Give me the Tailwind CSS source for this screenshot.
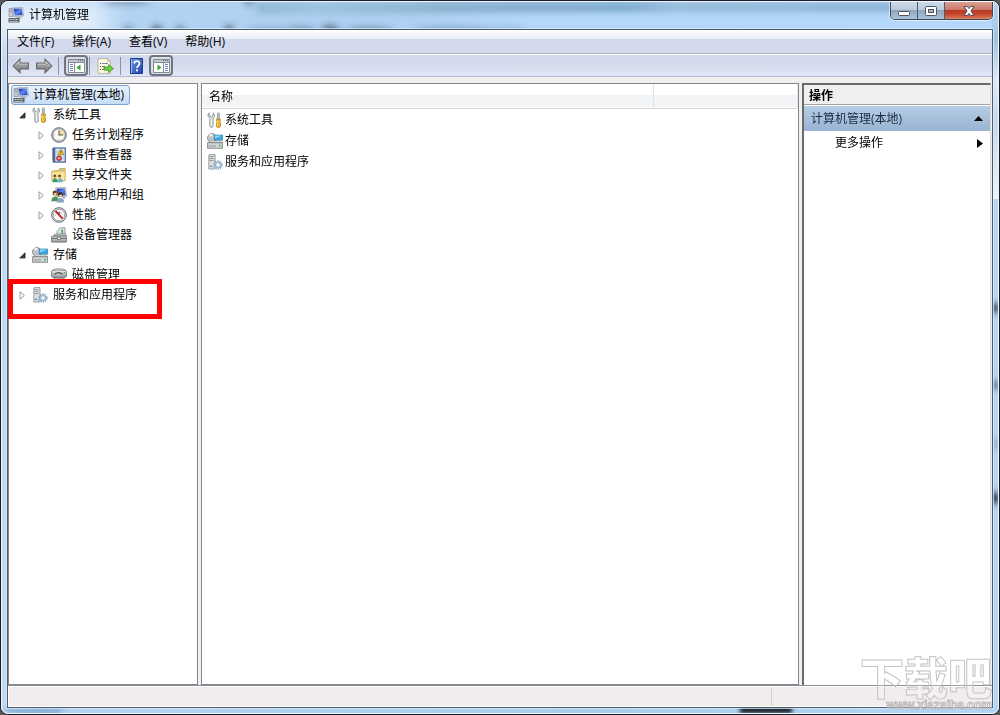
<!DOCTYPE html>
<html lang="zh-CN">
<head>
<meta charset="utf-8">
<title>计算机管理</title>
<script src="https://cdn.jsdelivr.net/npm/@tailwindcss/browser@4"></script>
</head>
<body class="relative flex h-screen overflow-hidden bg-[#5b5955] font-['Open_Sans','Noto_Sans_CJK_SC',sans-serif] text-xs text-black">

<svg width="0" height="0" class="absolute" aria-hidden="true">
  <defs>
    <linearGradient id="g-arrow" x1="0" y1="0" x2="0" y2="1"><stop offset="0" stop-color="#b5b5b5"/><stop offset="1" stop-color="#7d7d7d"/></linearGradient>
    <linearGradient id="g-screen" x1="0" y1="0" x2="1" y2="1"><stop offset="0" stop-color="#0d1fa8"/><stop offset=".5" stop-color="#5e86f0"/><stop offset="1" stop-color="#1230c0"/></linearGradient>
    <linearGradient id="g-metal" x1="0" y1="0" x2="0" y2="1"><stop offset="0" stop-color="#f4f4f4"/><stop offset="1" stop-color="#8e9296"/></linearGradient>
    <linearGradient id="g-help" x1="0" y1="0" x2="1" y2="1"><stop offset="0" stop-color="#6f9be8"/><stop offset="1" stop-color="#1b3fae"/></linearGradient>
    <filter id="f-blur" x="-50%" y="-100%" width="200%" height="300%"><feGaussianBlur stdDeviation="3"/></filter>

    <symbol id="i-computer" viewBox="0 0 16 16">
      <path d="M1 1.5h4v8H1z" fill="#c9cdd2" stroke="#7c828a" stroke-width=".6"/>
      <path d="M1.8 3h2M1.8 4.5h2" stroke="#6d7278" stroke-width=".6"/>
      <path d="M4.5.8 14.6.5 15.6 9 6 9.6z" fill="#d7dbe0" stroke="#8d949c" stroke-width=".6"/>
      <path d="M5.6 1.8 13.7 1.5 14.5 8 6.8 8.5z" fill="url(#g-screen)"/>
      <path d="M8.8 9.5h3.6l1.2 2H8z" fill="#aeb3b8"/>
      <path d="M.5 11h11v4.5H.5z" fill="#5d6266"/>
      <path d="M1.5 12h2v1h-2zM4.5 12h2v1h-2zM7.5 12h2v1h-2zM1.5 14h8.5v.7H1.5z" fill="#d5d8da"/>
    </symbol>
    <symbol id="i-tools" viewBox="0 0 16 16">
      <path d="M2.2.8 2.4 3.7 4.3 4.6 6 3.6 6.1.9C7.6 1.8 8 4 7 5.3L6.1 6.4v7.7c0 1.8-3.3 1.8-3.3 0V6.4L1.5 5.2C.6 3.8.8 1.7 2.2.8z" fill="#d9dcde" stroke="#777b7f" stroke-width=".7"/>
      <path d="M4.5 7v7" stroke="#fff" stroke-width=".8"/>
      <path d="M10.4 1.5 11.3.5l1 1v5.7h-1.9z" fill="#c3c6c9" stroke="#74787c" stroke-width=".6"/>
      <path d="M9.4 7.2h4v1.9l-.8.8.9 1v3.2c0 1.9-4.2 1.9-4.2 0v-3.2l.9-1-.8-.8z" fill="#eeb220" stroke="#a96f06" stroke-width=".6"/>
      <path d="M10.7 8v6" stroke="#ffe48a" stroke-width=".8"/>
    </symbol>
    <symbol id="i-clock" viewBox="0 0 16 16">
      <circle cx="8" cy="8" r="7.3" fill="#b4bbc4" stroke="#62666c" stroke-width=".9"/>
      <circle cx="8" cy="8" r="5.9" fill="#fdf9ec" stroke="#8c9198" stroke-width=".5"/>
      <path d="M8 8V2.4A5.6 5.6 0 0 1 13.6 8z" fill="#f3dfa5"/>
      <path d="M8 3.5V8h3.8" fill="none" stroke="#50545b" stroke-width="1.1"/>
      <path d="M8 12.4v1M2.7 8h1M12.4 8h1" stroke="#8a8e94" stroke-width=".7"/>
    </symbol>
    <symbol id="i-event" viewBox="0 0 16 16">
      <path d="M2 .8h12.500v14.500H2z" fill="#4a6fae" stroke="#2c4a85" stroke-width=".6"/>
      <path d="M4.300 1.600h9.400v12.800H4.300z" fill="#dfe8f5"/>
      <path d="M5 4h8M5 6h8M5 8h8M5 10h8M5 12h8" stroke="#93abd3" stroke-width=".6"/>
      <path d="M.9 2.600h2.600M.9 5h2.600M.9 7.400h2.600M.9 9.800h2.600M.9 12.200h2.600" stroke="#555f70" stroke-width=".9"/>
      <path d="M9.900 2 13 7.500H6.900z" fill="#ffd320" stroke="#a77e00" stroke-width=".6"/>
      <path d="M9.900 3.800v2M9.900 6.300v.7" stroke="#222" stroke-width=".8"/>
      <circle cx="8" cy="11.300" r="2.500" fill="#d8303c" stroke="#93141d" stroke-width=".5"/>
      <path d="M7 10.300l2 2M9 10.300l-2 2" stroke="#fff" stroke-width=".9"/>
    </symbol>
    <symbol id="i-share" viewBox="0 0 16 16">
      <path d="M.8 4.200 7.500 3.400 8.600 1.500h5.600v12.200H.8z" fill="#efcb62" stroke="#b18c2a" stroke-width=".6"/>
      <path d="M9 2.400h4.400v1.200H9z" fill="#8fc7e8"/>
      <path d="M1.400 5.200h12.200v8H1.400z" fill="#fae6a0"/>
      <circle cx="3.900" cy="9" r="1.500" fill="#6a4a22"/><circle cx="8.500" cy="9" r="1.500" fill="#6a4a22"/>
      <path d="M4.200 9.200 5 11H3zM8.800 9.200l.8 1.800h-2z" fill="#e5b78c"/>
      <path d="M1.400 15.300c0-5.500 5.400-5.500 5.400 0z" fill="#3d9a68"/><path d="M6.400 15.300c0-5.500 5.400-5.500 5.400 0z" fill="#6db2c4"/>
    </symbol>
    <symbol id="i-users" viewBox="0 0 16 16">
      <path d="M4.600.8 14.600.5 15.600 9.200 6 9.800z" fill="#d7dbe0" stroke="#8d949c" stroke-width=".6"/>
      <path d="M5.800 1.800 13.700 1.500 14.500 8.200 6.800 8.600z" fill="url(#g-screen)"/>
      <path d="M11.600 9.500h2.600v2.200h-2.600z" fill="#aeb3b8"/>
      <circle cx="4.200" cy="6" r="2.600" fill="#5c3d1f"/><path d="M2.700 6.200c1 .1 2-.4 2.700-1 .8 1.500.2 3.600-1.200 3.600S2.600 7.400 2.700 6.200z" fill="#efc59d"/>
      <path d="M.3 14.200c0-6.200 7.800-6.200 7.800 0z" fill="#4b9855"/>
      <circle cx="9.400" cy="7.600" r="2.500" fill="#4a3020"/><path d="M8 7.900c1 .1 2-.4 2.600-1 .8 1.500.2 3.300-1.100 3.300S8 9 8 7.900z" fill="#efc59d"/>
      <path d="M5.600 15.500c0-6 7.700-6 7.700 0z" fill="#8aa3be"/>
    </symbol>
    <symbol id="i-perf" viewBox="0 0 16 16">
      <circle cx="8" cy="8" r="7.300" fill="#dfe1e3" stroke="#55585c" stroke-width=".9"/>
      <circle cx="8" cy="8" r="5.700" fill="#fff" stroke="#777" stroke-width=".6"/>
      <path d="M4.200 8.500a3.900 3.900 0 0 1 7.600 0" fill="none" stroke="#6b6f73" stroke-width=".9" stroke-dasharray="1 1"/>
      <path d="M4.400 3.900 11.600 11.600" stroke="#d01c26" stroke-width="2"/>
      <path d="M8.400 4.600v4" stroke="#555" stroke-width=".8"/>
    </symbol>
    <symbol id="i-device" viewBox="0 0 16 16">
      <path d="M6 4.500 9 .8h5v7.400H6z" fill="#dfe3e4" stroke="#767c80" stroke-width=".7"/>
      <path d="M10.300 2.600h1.800v4h-1.800z" fill="#4fa953"/>
      <path d="M2.200 9 4 7h10.500l1 2z" fill="#c2c7cb" stroke="#6d7378" stroke-width=".6"/>
      <path d="M.6 9.300h14.800v5.800H.6z" fill="url(#g-metal)" stroke="#5b6065" stroke-width=".7"/>
      <path d="M.8 11.300h14.400" stroke="#53585d" stroke-width="1"/>
      <path d="M6.500 10.300h3v2.200h-3z" fill="#f6f6f6" stroke="#53585d" stroke-width=".6"/>
    </symbol>
    <symbol id="i-storage" viewBox="0 0 16 16">
      <circle cx="4.900" cy="5" r="4.400" fill="#c4c9cc" stroke="#676c70" stroke-width=".7"/>
      <path d="M4.900 5 1.800 2A4.200 4.200 0 0 1 5.400.9z" fill="#f3f5f6"/>
      <circle cx="4.900" cy="5" r="1.200" fill="#fff" stroke="#7a7f83" stroke-width=".6"/>
      <path d="M7.400 2h8.200v5.200H7.400z" fill="#3faae0" stroke="#1f6e9e" stroke-width=".6"/>
      <path d="M8 2.600h7L8 5.300z" fill="#93dafa"/>
      <path d="M1.500 9.700 3 8h11l1.500 1.700z" fill="#eef0f1" stroke="#7d8286" stroke-width=".5"/>
      <path d="M.6 9.700h15v5.600H.6z" fill="#d2d5d8" stroke="#5e6367" stroke-width=".7"/>
      <path d="M2 13h7" stroke="#8a8f93" stroke-width=".9"/><path d="M12 11.700h1.800v1.800H12z" fill="#3fc043"/>
    </symbol>
    <symbol id="i-disk" viewBox="0 0 16 16">
      <path d="M1 3.500C2.500 1 13.500 1 15 3.500z" fill="#f0f1f2" stroke="#83888c" stroke-width=".6"/>
      <path d="M.6 4.200c0-1.600 14.800-1.600 14.800 0v5.300c0 1.500-14.800 1.500-14.800 0z" fill="url(#g-metal)" stroke="#5b6064" stroke-width=".7"/>
      <path d="M3.500 7.200Q8 4.200 11.500 7.200" fill="none" stroke="#44484c" stroke-width="1.300"/>
      <path d="M12.700 5h1.500v1.500h-1.500z" fill="#3fc043"/>
      <path d="M2.500 10.500h11l-1.500 3.500H4z" fill="#a9aeb2" stroke="#666b6f" stroke-width=".6"/>
    </symbol>
    <symbol id="i-service" viewBox="0 0 16 16">
      <path d="M1.800 1.200 3 .4h5v13.800l-1 .8H1.800z" fill="#dbe0e4" stroke="#737a80" stroke-width=".7"/>
      <path d="M2.600 2.600h4M2.600 4.600h4M2.600 6.600h4" stroke="#7d858c" stroke-width=".8"/>
      <path d="M3.200 12.200h1.600" stroke="#3d444a" stroke-width="1"/>
      <circle cx="11" cy="11" r="3.900" fill="none" stroke="#7f9fbc" stroke-width="1.600" stroke-dasharray="1.400 1.050"/>
      <circle cx="11" cy="11" r="2.500" fill="#fff" stroke="#9dbad4" stroke-width="1.600"/>
      <circle cx="6.900" cy="14" r="1.200" fill="#dce9f3" stroke="#8aa7c0" stroke-width=".8"/>
    </symbol>
    <symbol id="i-arrow" viewBox="0 0 18 16">
      <path d="M1.200 8 8 1.200v3.900h8.400v5.800H8v3.900z" fill="url(#g-arrow)" stroke="#686868" stroke-width="1.100"/>
      <path d="M2.800 8 7 3.700V6.100h8.300" fill="none" stroke="#d5d5d5" stroke-width=".8"/>
    </symbol>
    <symbol id="i-pane" viewBox="0 0 17 15">
      <path d="M.5 1.500h16v13H.5z" fill="#fff" stroke="#858b96"/>
      <path d="M1 2h15v2H1z" fill="#c2c8d3"/>
      <path d="M10 2.500h1M12 2.500h1M14 2.500h1" stroke="#5d6470"/>
      <path d="M1 4.500h15M6.500 5v9" stroke="#858b96"/>
      <path d="M2 6.500h3M2 8.500h3M2 10.500h3M2 12.500h3" stroke="#6f88b8"/>
      <path d="M12.500 6.500v6L8.500 9.500z" fill="#37a62c"/>
    </symbol>
    <symbol id="i-pane2" viewBox="0 0 17 15">
      <path d="M.5 1.500h16v13H.5z" fill="#fff" stroke="#858b96"/>
      <path d="M1 2h15v2H1z" fill="#c2c8d3"/>
      <path d="M10 2.500h1M12 2.500h1M14 2.500h1" stroke="#5d6470"/>
      <path d="M1 4.500h15M10.500 5v9" stroke="#858b96"/>
      <path d="M12 6.500h3M12 8.500h3M12 10.500h3M12 12.500h3" stroke="#6f88b8"/>
      <path d="M4.500 6.500v6l4-3z" fill="#37a62c"/>
    </symbol>
    <symbol id="i-export" viewBox="0 0 17 16">
      <path d="M1 .6h9.500L13.400 3.500v11.900H1z" fill="#fffbe3" stroke="#a8a38a" stroke-width=".8"/>
      <path d="M10.500.6v2.900h2.900z" fill="#e3dcb4" stroke="#a8a38a" stroke-width=".5"/>
      <path d="M3 5.500h1M3 8.500h1M3 11.500h1" stroke="#444"/><path d="M5 5.500h6M5 8.500h3M5 11.500h5" stroke="#6f83ae"/>
      <path d="M7 9h4.500V6.500L16.400 10.600 11.500 14.600V12.200H7z" fill="#66d13a" stroke="#2e8b1b" stroke-width=".7"/>
    </symbol>
    <symbol id="i-help" viewBox="0 0 13 16">
      <path d="M.5.5h12v15H.5z" fill="url(#g-help)" stroke="#1f3b8f"/>
      <path d="M1.500 1v14" stroke="#9dbdf3"/>
      <path d="M4.300 5.500C4.300 2.300 9.500 2.300 9.500 5.400 9.500 7.600 7 7.600 7 10" fill="none" stroke="#fff" stroke-width="1.700"/>
      <path d="M6 11.500h2v1.800H6z" fill="#fff"/>
    </symbol>
    <symbol id="i-closed" viewBox="0 0 7 9"><path d="M1 .8v7.400L5.300 4.500z" fill="#fff" stroke="#9a9a9a"/></symbol>
    <symbol id="i-open" viewBox="0 0 7 7"><path d="M6 .8V6H.8z" fill="#404040" stroke="#1c1c1c" stroke-width=".8"/></symbol>
  </defs>
</svg>

<div class="flex min-w-0 flex-1 flex-col rounded-lg border border-[#1b1c28] bg-[#b3d5f7]">
 <div class="relative flex min-h-0 flex-1 flex-col rounded-[7px] border border-[#eef6fd] bg-[linear-gradient(90deg,#c3dbf1,#b4d4f4_30px,#a9cdef_60%,#b3d5f7)] px-[5px] pb-[5px]">

  <!-- glass reflections along the frame -->
  <div class="pointer-events-none absolute inset-0 overflow-hidden rounded-md" aria-hidden="true">
    <div class="absolute top-0 right-0 left-[255px] h-3 bg-[linear-gradient(90deg,#92b8d3,#9cc3e2_8%,#8cb2d0_25%,#82add0_50%,#9abddc_56%,#8ab3d5)] blur-[3px]"></div>
    <div class="absolute top-3 right-0 left-[35%] h-4 bg-[linear-gradient(90deg,#b4d7fa00,#b4d7fa_30%)] blur-[3px]"></div>
    <div class="absolute top-0 -left-3 h-9 w-30 rounded-full bg-white/70 blur-md"></div>
    <div class="absolute top-0 right-0 h-[197px] w-[6px] bg-[linear-gradient(#b7d3ee,#9fc4e6_20%,#dfecf8_40%,#c5d9ea_60%,#eef4fa)]"></div>
    <svg class="absolute inset-0 h-full w-full">
      <g filter="url(#f-blur)" fill="#24364a">
        <ellipse cx="126" cy="28" rx="6" ry="4" opacity=".4"/><ellipse cx="155" cy="28" rx="6" ry="5" opacity=".6"/>
        <ellipse cx="178" cy="28" rx="5" ry="4" opacity=".5"/><ellipse cx="227" cy="28" rx="5" ry="5" opacity=".6"/>
        <ellipse cx="268" cy="29" rx="24" ry="3" opacity=".35"/><ellipse cx="300" cy="28" rx="14" ry="4" opacity=".35"/>
        <ellipse cx="328" cy="28" rx="9" ry="5" opacity=".6"/><ellipse cx="368" cy="29" rx="24" ry="4" opacity=".4"/>
        <ellipse cx="450" cy="29" rx="40" ry="4" opacity=".3"/><ellipse cx="504" cy="29" rx="20" ry="3" opacity=".25"/>
        <ellipse cx="125" cy="0" rx="24" ry="2" opacity=".5"/><ellipse cx="247" cy="0" rx="5" ry="3" opacity=".5"/>
      </g>
    </svg>
    <svg class="absolute top-0 right-0 h-full w-[6px]">
      <g filter="url(#f-blur)" fill="#142434"><ellipse cx="3" cy="306" rx="5" ry="5" opacity=".8"/><ellipse cx="3" cy="383" rx="5" ry="4" opacity=".6"/><ellipse cx="3" cy="496" rx="5" ry="6" opacity=".9"/><ellipse cx="3" cy="442" rx="4" ry="4" opacity=".3"/></g>
    </svg>
    <div class="absolute bottom-0 left-[738px] h-[6px] w-13 bg-[#080c12] blur-[2px]"></div>
    <div class="absolute bottom-0 left-1 h-[5px] w-14 bg-[#6f9cc8] blur-[3px]"></div>
  </div>

  <header class="relative flex h-[27px] items-start justify-between">
    <div class="flex h-[25px] items-center gap-[5px] pl-px">
      <svg class="size-4"><use href="#i-computer"/></svg>
      <h1>计算机管理</h1>
    </div>
    <div class="flex h-[18px] overflow-hidden rounded-b-[5px] border border-t-0 border-[#3f4a58] shadow-[0_0_0_1px_rgba(255,255,255,.55)]">
      <button aria-label="最小化" class="flex w-[27px] items-center justify-center border-r border-[#4d5a6a] bg-[linear-gradient(#cddbe8,#b8cadc_48%,#8fa6be_50%,#aac3dc)]">
        <svg class="h-3 w-4" viewBox="0 0 16 12"><rect x="2.500" y="6.500" width="11" height="4" rx="1" fill="#fff" stroke="#50545f"/></svg>
      </button>
      <button aria-label="最大化" class="flex w-[27px] items-center justify-center border-r border-[#4d5a6a] bg-[linear-gradient(#cddbe8,#b8cadc_48%,#8fa6be_50%,#aac3dc)]">
        <svg class="h-3 w-4" viewBox="0 0 16 12"><rect x="2.500" y="1.500" width="11" height="9" rx="1" fill="#fff" stroke="#50545f"/><rect x="5.500" y="4.500" width="5" height="3" fill="#9fb4ca" stroke="#50545f"/></svg>
      </button>
      <button aria-label="关闭" class="flex w-[47px] items-center justify-center bg-[linear-gradient(#dba294,#cb7466_48%,#b33a25_50%,#c9492e_75%,#d98467)]">
        <svg class="h-3 w-4" viewBox="0 0 16 12"><path d="M3 1.500h3.200L8 3.600 9.800 1.500H13L9.900 6l3.100 4.500H9.800L8 8.400l-1.800 2.100H3L6.100 6z" fill="#fff" stroke="#4f5160"/></svg>
      </button>
    </div>
  </header>

  <div class="relative flex min-h-0 flex-1 flex-col border border-[#4c5b6c] bg-[#f0f0f0] shadow-[0_0_0_1px_rgba(225,240,253,.7)]">
    <nav aria-label="菜单" class="flex h-6 items-center gap-[18px] border-b border-[#b2b5bd] bg-[linear-gradient(#fff,#e7edf6_9px,#d3d9ec_9px)] pl-[9px]">
      <button>文件(F)</button><button>操作(A)</button><button>查看(V)</button><button>帮助(H)</button>
    </nav>
    <div role="toolbar" aria-label="工具栏" class="flex h-[23px] items-center border-t border-b border-t-white border-b-[#aebbd5] bg-[linear-gradient(#d3d9ec_30%,#e0e6f4)] pl-1">
      <button aria-label="后退"><svg class="h-4 w-[18px]"><use href="#i-arrow"/></svg></button>
      <button aria-label="前进" class="ml-[5px]"><svg class="h-4 w-[18px] -scale-x-100"><use href="#i-arrow"/></svg></button>
      <span class="ml-[5px] h-[18px] w-px bg-[#8d929e]"></span>
      <button aria-label="显示/隐藏控制台树" class="ml-[5px] flex h-[21px] w-6 items-center justify-center rounded-[4px] border-2 border-[#71757f] bg-[#dadde6]"><svg class="h-[15px] w-[17px] shrink-0"><use href="#i-pane"/></svg></button>
      <span class="ml-px h-[18px] w-px bg-[#8d929e]"></span>
      <button aria-label="导出列表" class="ml-[7px]"><svg class="h-4 w-[17px]"><use href="#i-export"/></svg></button>
      <span class="ml-[6px] h-[18px] w-px bg-[#8d929e]"></span>
      <button aria-label="帮助" class="ml-[9px]"><svg class="h-4 w-[13px]"><use href="#i-help"/></svg></button>
      <button aria-label="显示/隐藏操作窗格" class="ml-[6px] flex h-[21px] w-6 items-center justify-center rounded-[4px] border-2 border-[#71757f] bg-[#dadde6]"><svg class="h-[15px] w-[17px] shrink-0"><use href="#i-pane2"/></svg></button>
    </div>

    <main class="flex min-h-0 flex-1 gap-[3px] pt-[6px] pr-px">
      <section aria-label="控制台树" class="w-[190px] border border-[#828790] bg-white pt-px leading-5">
        <ul>
          <li><a href="#root" class="ml-[2px] flex h-5 w-[119px] items-center gap-1 rounded-[3px] border border-[#7da2ce] bg-[linear-gradient(#e9f2fd,#c6dcf8)] pl-px whitespace-nowrap"><svg class="size-4 shrink-0"><use href="#i-computer"/></svg>计算机管理(本地)</a></li>
          <li class="flex h-5 items-center pl-[10px]"><button aria-label="折叠"><svg class="h-[7px] w-[7px]"><use href="#i-open"/></svg></button><svg class="mr-[5px] ml-[6px] size-4"><use href="#i-tools"/></svg>系统工具</li>
          <li>
            <ul>
              <li class="flex h-5 items-center pl-[29px]"><button aria-label="展开"><svg class="h-[9px] w-[7px]"><use href="#i-closed"/></svg></button><svg class="mr-[5px] ml-[6px] size-4"><use href="#i-clock"/></svg>任务计划程序</li>
              <li class="flex h-5 items-center pl-[29px]"><button aria-label="展开"><svg class="h-[9px] w-[7px]"><use href="#i-closed"/></svg></button><svg class="mr-[5px] ml-[6px] size-4"><use href="#i-event"/></svg>事件查看器</li>
              <li class="flex h-5 items-center pl-[29px]"><button aria-label="展开"><svg class="h-[9px] w-[7px]"><use href="#i-closed"/></svg></button><svg class="mr-[5px] ml-[6px] size-4"><use href="#i-share"/></svg>共享文件夹</li>
              <li class="flex h-5 items-center pl-[29px]"><button aria-label="展开"><svg class="h-[9px] w-[7px]"><use href="#i-closed"/></svg></button><svg class="mr-[5px] ml-[6px] size-4"><use href="#i-users"/></svg>本地用户和组</li>
              <li class="flex h-5 items-center pl-[29px]"><button aria-label="展开"><svg class="h-[9px] w-[7px]"><use href="#i-closed"/></svg></button><svg class="mr-[5px] ml-[6px] size-4"><use href="#i-perf"/></svg>性能</li>
              <li class="flex h-5 items-center pl-[42px]"><svg class="mr-[5px] size-4"><use href="#i-device"/></svg>设备管理器</li>
            </ul>
          </li>
          <li class="flex h-5 items-center pl-[10px]"><button aria-label="折叠"><svg class="h-[7px] w-[7px]"><use href="#i-open"/></svg></button><svg class="mr-[5px] ml-[6px] size-4"><use href="#i-storage"/></svg>存储</li>
          <li class="flex h-5 items-center pl-[42px]"><svg class="mr-[5px] size-4"><use href="#i-disk"/></svg>磁盘管理</li>
          <li class="relative flex h-5 items-center pl-[10px]"><button aria-label="展开"><svg class="h-[9px] w-[7px]"><use href="#i-closed"/></svg></button><svg class="mr-[5px] ml-[6px] size-4"><use href="#i-service"/></svg>服务和应用程序
            <span class="pointer-events-none absolute -top-[6px] -left-px h-10 w-[154px] border-5 border-[#fe0000]"></span>
          </li>
        </ul>
      </section>

      <section aria-label="列表" class="min-w-0 flex-1 border border-[#828790] bg-white">
        <table class="w-full border-collapse">
          <thead>
            <tr class="h-6 border-b border-[#d5d5d5] bg-[linear-gradient(#fff_45%,#f2f3f5_50%,#f4f5f6)]">
              <th class="border-r border-[#dfe2e6] pt-[2px] pl-[7px] text-left font-normal">名称</th>
              <th class="w-36 border-r border-[#e6e8eb]" aria-label="空列"></th>
            </tr>
          </thead>
          <tbody>
            <tr><td class="p-0 pt-px pl-[5px]" colspan="2"><div class="flex h-[21px] items-center gap-[2px]"><svg class="size-4"><use href="#i-tools"/></svg>系统工具</div></td></tr>
            <tr><td class="p-0 pl-[5px]" colspan="2"><div class="flex h-[21px] items-center gap-[2px]"><svg class="size-4"><use href="#i-storage"/></svg>存储</div></td></tr>
            <tr><td class="p-0 pl-[5px]" colspan="2"><div class="flex h-[21px] items-center gap-[2px]"><svg class="size-4"><use href="#i-service"/></svg>服务和应用程序</div></td></tr>
          </tbody>
        </table>
      </section>

      <aside aria-label="操作" class="w-[189px] border-t-2 border-r border-l-2 border-[#6b6b6b] border-r-[#dcdcdc] bg-white">
        <h2 class="flex h-5 items-center border-b border-[#a3a09c] bg-[#f0f0f0] pt-[2px] pl-[5px] font-bold">操作</h2>
        <button class="mt-px flex h-[25px] w-full items-center justify-between bg-[linear-gradient(#b5cde6,#98b4d2)] pr-[7px] pl-[7px] text-[#1c2c40]">计算机管理(本地)<svg class="h-[5px] w-[9px]" viewBox="0 0 9 5"><path d="M0 5 4.500 0 9 5z" fill="#000"/></svg></button>
        <button class="flex h-6 w-full items-center justify-between pr-[7px] pl-[31px]">更多操作<svg class="h-[9px] w-[6px]" viewBox="0 0 6 9"><path d="M0 0v9l6-4.500z" fill="#000"/></svg></button>
      </aside>
    </main>

    <footer class="flex h-[22px] justify-end border-t border-b border-t-[#8b8f95] border-b-white bg-[#f0edec] shadow-[inset_0_1px_0_#fff,inset_1px_0_0_#fff]">
      <span class="mt-[2px] h-[18px] w-[221px] border-l border-[#d4d1d0]"></span>
    </footer>
  </div>
 </div>
</div>

<div class="pointer-events-none absolute right-2 bottom-1 text-right font-black whitespace-nowrap text-white/20">
  <p class="h-[46px] font-['Noto_Sans_CJK_SC'] text-[44px] leading-[46px] [-webkit-text-stroke:1px_#c6c4c4]">下载吧</p>
  <p class="h-3 font-['Liberation_Sans'] text-xs leading-3 [-webkit-text-stroke:1px_#bdbaba]">www.xiazaiba.com</p>
</div>
</body>
</html>
